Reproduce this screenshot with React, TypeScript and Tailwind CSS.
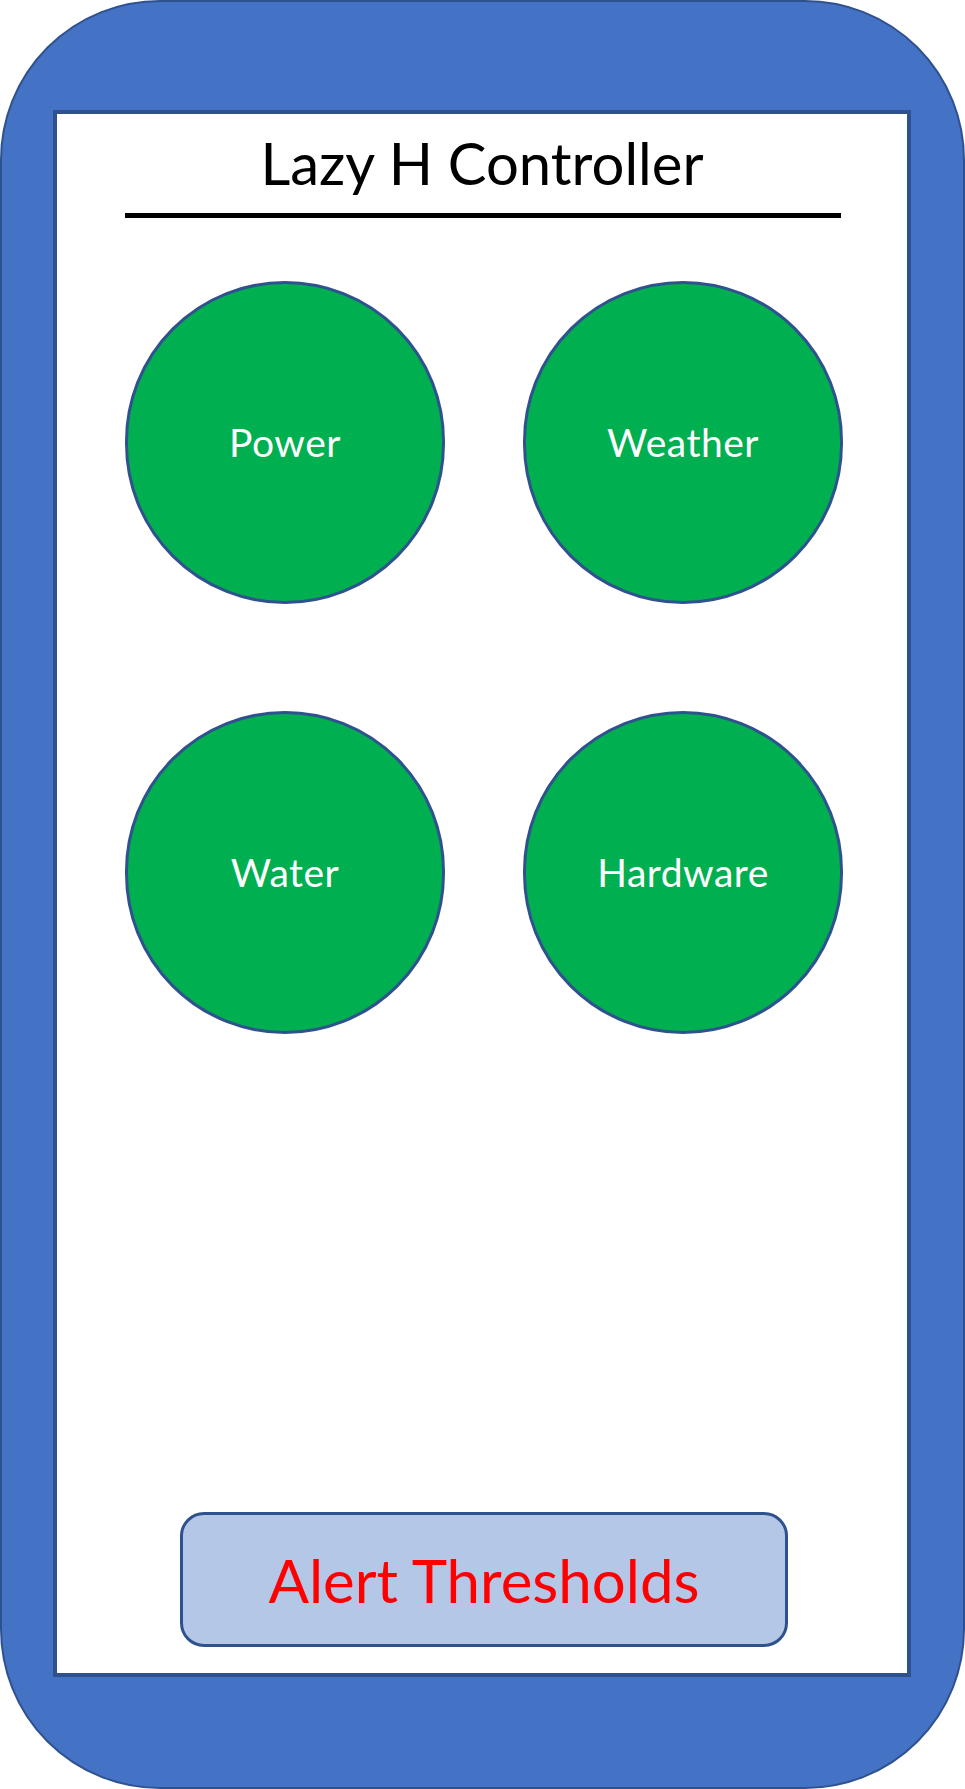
const tiles = ['Power', 'Weather', 'Water', 'Hardware']

export default function App() {
  return (
    <div className="w-[965px] h-[1789px] bg-white font-['Lato','Open_Sans',sans-serif]">
      {/* phone body */}
      <div className="w-full h-full rounded-[160px] bg-[#4472C4] border-2 border-[#2F528F] pl-[51px] pr-[52px] pt-[108px] pb-[110px]">
        {/* screen */}
        <div className="w-full h-full bg-white border-4 border-[#2F528F] flex flex-col">
          <h1 className="mt-[20px] h-[58px] text-center text-[58px] leading-none text-black font-normal">
            Lazy H Controller
          </h1>
          <div className="mt-[21px] ml-[68px] w-[716px] h-[5px] bg-black" />

          <div className="mt-[63px] ml-[68px] grid grid-cols-[320px_320px] gap-x-[78px] gap-y-[107px]">
            {tiles.map((t) => (
              <div
                key={t}
                className="w-[320px] h-[323px] rounded-full bg-[#00B050] border-[3px] border-[#2F528F] flex items-center justify-center"
              >
                <span className="text-white text-[39px] leading-none tracking-[0.5px]">{t}</span>
              </div>
            ))}
          </div>

          <button className="mt-auto mb-[26px] ml-[123px] w-[608px] h-[135px] rounded-[24px] bg-[#B4C7E7] border-[3px] border-[#2F528F] flex items-center justify-center">
            <span className="text-[#FF0000] text-[60px] leading-none">Alert Thresholds</span>
          </button>
        </div>
      </div>
    </div>
  )
}
